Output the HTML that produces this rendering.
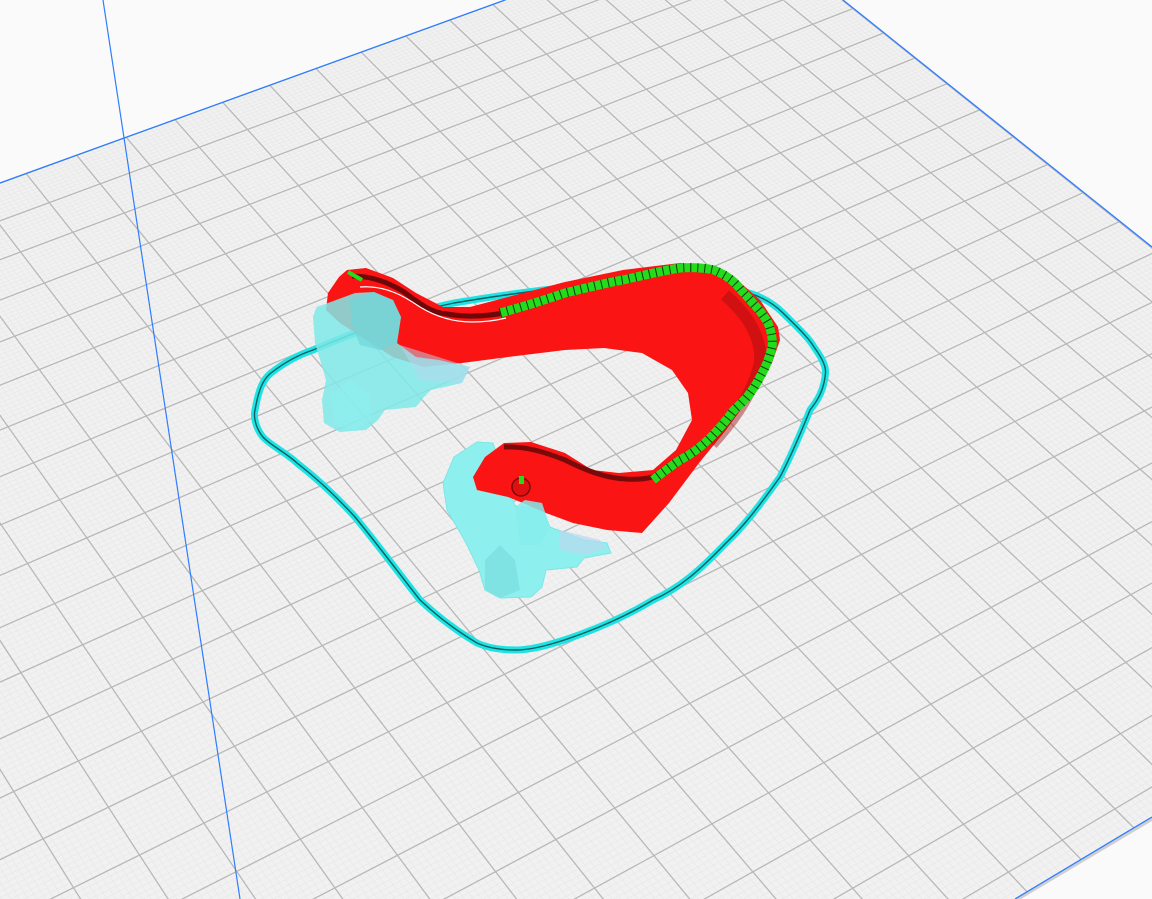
<!DOCTYPE html>
<html><head><meta charset="utf-8">
<style>
html,body{margin:0;padding:0;background:#fafafa;width:1152px;height:899px;overflow:hidden}
#wrap{position:absolute;left:0;top:0;width:1152px;height:899px;overflow:hidden}
svg{display:block}
</style></head>
<body>
<div id="wrap">
<svg id="s" width="1152" height="899" viewBox="0 0 1152 899" xmlns="http://www.w3.org/2000/svg">
<defs>
<clipPath id="bed"><polygon points="0,183 505,0 843,0 1152,247 1152,817 1015,899 0,899"/></clipPath>
</defs>
<rect width="1152" height="899" fill="#fafafa"/>
<polygon points="0,183 505,0 843,0 1152,247 1152,817 1015,899 0,899" fill="#f1f1f1"/>
<g id="grid" clip-path="url(#bed)"></g>
<polygon points="1015,899 1152,817 1152,821 1021,899" fill="#cfcfcf"/>
<polyline points="0,183 505,0" stroke="#2f7dff" stroke-width="1.3" fill="none"/>
<polyline points="843,0 1152,247" stroke="#2f7dff" stroke-width="1.3" fill="none"/>
<polyline points="1015,899 1152,817" stroke="#2f7dff" stroke-width="1.3" fill="none"/>
<line x1="103" y1="0" x2="240" y2="899" stroke="#2f7dff" stroke-width="1.2"/>

<!-- skirt -->
<path id="sk" d="M254.5,413 C258,392 262,380 271,373 C285,362 298,355 313,350 C360,330 410,312 454,303 C520,292 580,285 623,283 C680,282 720,285 749,293 C765,298 775,305 783,313 C798,328 808,337 814,347 C822,358 826,366 825.5,373 C824,390 818,400 810,410 C798,440 790,458 780,477 C760,505 745,525 726,543 C700,570 680,588 653,600 C630,614 605,625 584,633 C560,642 535,650 515.5,650 C500,650 488,648 477,643 C455,630 438,617 420,600 C398,572 378,545 355,517 C335,495 315,477 297,463 C285,452 270,445 263,437 C257,430 254,420 254.5,413 Z" fill="none" stroke="#1fe3e3" stroke-width="7"/>
<path d="M254.5,413 C258,392 262,380 271,373 C285,362 298,355 313,350 C360,330 410,312 454,303 C520,292 580,285 623,283 C680,282 720,285 749,293 C765,298 775,305 783,313 C798,328 808,337 814,347 C822,358 826,366 825.5,373 C824,390 818,400 810,410 C798,440 790,458 780,477 C760,505 745,525 726,543 C700,570 680,588 653,600 C630,614 605,625 584,633 C560,642 535,650 515.5,650 C500,650 488,648 477,643 C455,630 438,617 420,600 C398,572 378,545 355,517 C335,495 315,477 297,463 C285,452 270,445 263,437 C257,430 254,420 254.5,413 Z" fill="none" stroke="#0b5e62" stroke-width="1.4"/>

<!-- lower support (behind red) -->
<polygon points="443,483 454,457 477,442 493,443 515.5,507 542,507 550,527 584,540 607,543 611,553 584,558 577,567 546,570 542,587 531,597 500,598 485,590 479,570 466,543 447,510" fill="#8ef0ee" stroke="#7ee6e6" stroke-width="1"/>
<polygon points="485,560 500,545 515,560 520,590 500,598 485,590" fill="#7fe3e3"/>
<polygon points="560,530 600,540 607,548 585,555 560,550" fill="#b9d8f0" opacity="0.7"/>

<!-- red band -->
<polygon points="347,270 366,268 393,278 416,293 443,307 470,307 508,297 565,282 623,270 680,263 711,265 734,277 760,300 778,327 780,340 772,363 753,393 726,430 699,463 669,503 642,533 607,530 573,523 546,513 523,503 508,497 477,490 473,477 485,457 504,443 531,442 565,453 592,470 619,473 653,470 676,450 692,420 688,393 672,370 642,353 604,348 565,350 508,357 462,363 424,367 393,357 366,340 351,330 340,323 326,310 328,293 339,277" fill="#fa1414"/>
<!-- dark folds -->
<path d="M352,276 C370,276 388,282 404,292 C420,304 432,313 447,314 C470,318 490,316 508,312" fill="none" stroke="#6e0808" stroke-width="5"/>
<path d="M360,287 C385,285 404,296 420,307 C438,318 455,322 472,322 C488,322 498,320 506,318" fill="none" stroke="#fff" stroke-width="1.2"/>
<path d="M504,447 C525,446 545,452 565,460 C585,470 605,478 625,479 C640,480 650,478 656,476" fill="none" stroke="#7a0a0a" stroke-width="5"/>
<path d="M725,295 C748,315 762,338 760,362 C754,392 732,422 712,444" fill="none" stroke="#a00d0d" stroke-width="12" opacity="0.45"/>
<!-- green stripe -->
<path id="gs" d="M500,313 C530,305 550,298 565,293 C590,287 610,282 623,280 C650,274 665,270 680,268 C695,267 705,268 714,270 C728,276 735,282 741,290 C752,302 762,312 768,323 C772,333 773,340 772,347 C769,360 765,368 760,377 C752,393 743,402 734,410 C725,422 718,430 711,437 C700,448 690,455 680,460 C670,467 662,473 653,480" fill="none" stroke="#25dc1c" stroke-width="9"/>
<path d="M500,313 C530,305 550,298 565,293 C590,287 610,282 623,280 C650,274 665,270 680,268 C695,267 705,268 714,270 C728,276 735,282 741,290 C752,302 762,312 768,323 C772,333 773,340 772,347 C769,360 765,368 760,377 C752,393 743,402 734,410 C725,422 718,430 711,437 C700,448 690,455 680,460 C670,467 662,473 653,480" fill="none" stroke="#0b3a08" stroke-width="9" stroke-dasharray="1 6"/>
<path d="M348,272 L362,280" stroke="#25dc1c" stroke-width="4"/>
<circle cx="521" cy="487" r="9" fill="#e01010" stroke="#7a0a0a" stroke-width="1.5"/>
<rect x="519" y="476" width="5" height="8" fill="#25dc1c"/>

<!-- left support (in front) -->
<polygon points="316.5,307 328,303 355,293 374,292 393,300 401,317 397,343 416,357 439,360 470,367 462,383 431,390 424,397 416,407 385,410 378,420 366,430 339.5,432 324,423 322,400 326,380 315,343 313,317" fill="#7fe9e9" opacity="0.85"/>
<polygon points="350,300 374,292 393,300 401,317 397,343 380,350 360,345 352,325" fill="#6fd6d8" opacity="0.7"/>
<polygon points="330,395 350,380 370,395 372,420 355,430 335,425" fill="#8eeeee" opacity="0.6"/>
<polygon points="400,345 470,367 462,383 420,380" fill="#b9d8f0" opacity="0.5"/>
<polygon points="515,507 525,500 542,503 550,527 540,545 520,545" fill="#86ecec" opacity="0.85"/>
</svg>
</div>
<script>
(function(){
var g=document.getElementById('grid');
function P(t,s){var w=1+t+s;return[(737+5579*t-1783*s)/w,(-84-1839*t-2101*s)/w];}
var dt=-0.008, ds=-0.01097;
var minor='',major='';
var TMAX=-0.42, SMAX=-0.27;
function seg(a,b){return 'M'+a[0].toFixed(1)+','+a[1].toFixed(1)+'L'+b[0].toFixed(1)+','+b[1].toFixed(1);}
for(var k=0;k<=520;k++){var t=dt*k/10; if(t<TMAX)break;
  var d=seg(P(t,0),P(t,SMAX)); if(k%10==0)major+=d; else minor+=d;}
for(var k=0;k<=250;k++){var s=ds*k/10; if(s<SMAX)break;
  var d=seg(P(0,s),P(TMAX,s)); if(k%10==0)major+=d; else minor+=d;}
var ns='http://www.w3.org/2000/svg';
var p1=document.createElementNS(ns,'path');p1.setAttribute('d',minor);p1.setAttribute('stroke','#e7e7e7');p1.setAttribute('stroke-width','0.6');p1.setAttribute('fill','none');
var p2=document.createElementNS(ns,'path');p2.setAttribute('d',major);p2.setAttribute('stroke','#b8b8b8');p2.setAttribute('stroke-width','1.3');p2.setAttribute('fill','none');
g.appendChild(p1);g.appendChild(p2);
})();
</script>
</body></html>
